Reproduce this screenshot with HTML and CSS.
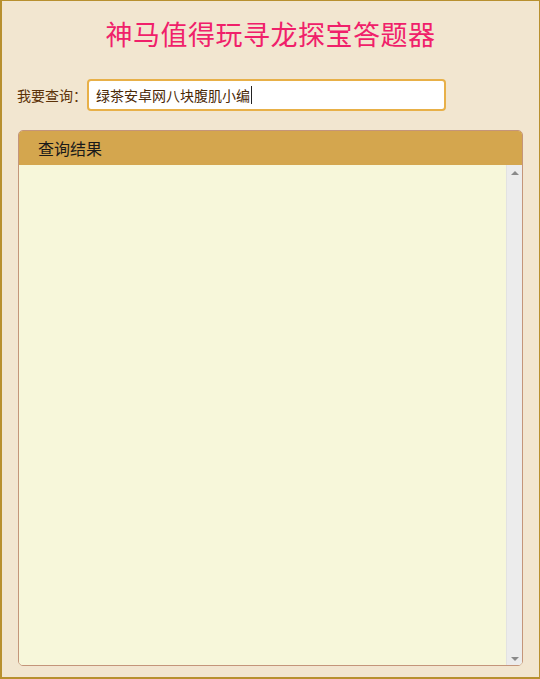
FILE: index.html
```html
<!DOCTYPE html>
<html lang="zh-CN">
<head>
<meta charset="utf-8">
<title>神马值得玩寻龙探宝答题器</title>
<link rel="stylesheet" href="styles.css">
</head>
<body>
<div class="app">
  <h1 class="title">神马值得玩寻龙探宝答题器</h1>
  <div class="search-row">
    <span class="search-label">我要查询：</span>
    <div class="search-input"><span class="search-text">绿茶安卓网八块腹肌小编</span><span class="caret"></span></div>
  </div>
  <div class="panel">
    <div class="panel-head">查询结果</div>
    <div class="panel-body">
      <div class="result"></div>
      <div class="scrollbar">
        <span class="arrow arrow-up"></span>
        <span class="arrow arrow-down"></span>
      </div>
    </div>
  </div>
</div>
</body>
</html>
```

FILE: styles.css
```css
html, body {
  margin: 0;
  padding: 0;
}
body {
  font-family: "Noto Sans CJK SC", "Liberation Sans", sans-serif;
  background: #f2e6d0;
}
.app {
  box-sizing: border-box;
  width: 540px;
  height: 679px;
  background: #f2e6d0;
  border-top: 1px solid #b8902f;
  border-left: 2px solid #b8902f;
  border-right: 1px solid #b8902f;
  border-bottom: 2px solid #b8902f;
  padding: 17px 16px 0 16px;
  display: flex;
  flex-direction: column;
}
.title {
  margin: 0;
  font-size: 27px;
  line-height: 31px;
  font-weight: normal;
  color: #f0206a;
  text-align: center;
  letter-spacing: 0.5px;
}
.search-row {
  margin-top: 30px;
  display: flex;
  align-items: center;
  height: 32px;
}
.search-label {
  font-size: 14px;
  color: #5c3208;
  margin-left: -1px;
  width: 70px;
}
.search-input {
  box-sizing: border-box;
  width: 359px;
  height: 32px;
  background: #fff;
  border: 2px solid #e8b048;
  border-radius: 4px;
  padding-left: 7px;
  display: flex;
  align-items: center;
  font-size: 14px;
  color: #4a2806;
}
.caret {
  display: inline-block;
  width: 1px;
  height: 18px;
  background: #222;
  margin-left: 1px;
}
.panel {
  margin-top: 19px;
  box-sizing: border-box;
  height: 536px;
  border: 1px solid #c4957a;
  border-radius: 5px;
  overflow: hidden;
  display: flex;
  flex-direction: column;
}
.panel-head {
  height: 34px;
  background: #d4a64e;
  color: #1a1a1a;
  font-size: 16px;
  line-height: 34px;
  padding-left: 19px;
}
.panel-body {
  flex: 1;
  display: flex;
  background: #f7f7da;
}
.result {
  flex: 1;
}
.scrollbar {
  width: 15px;
  background: #ececec;
  border-left: 1px solid #e2e2e2;
  display: flex;
  flex-direction: column;
  justify-content: space-between;
  align-items: center;
  padding: 6px 0 4px 0;
}
.arrow {
  width: 0;
  height: 0;
  border-left: 4px solid transparent;
  border-right: 4px solid transparent;
}
.arrow-up {
  border-bottom: 4px solid #8a8a8a;
}
.arrow-down {
  border-top: 4px solid #8a8a8a;
}
```
